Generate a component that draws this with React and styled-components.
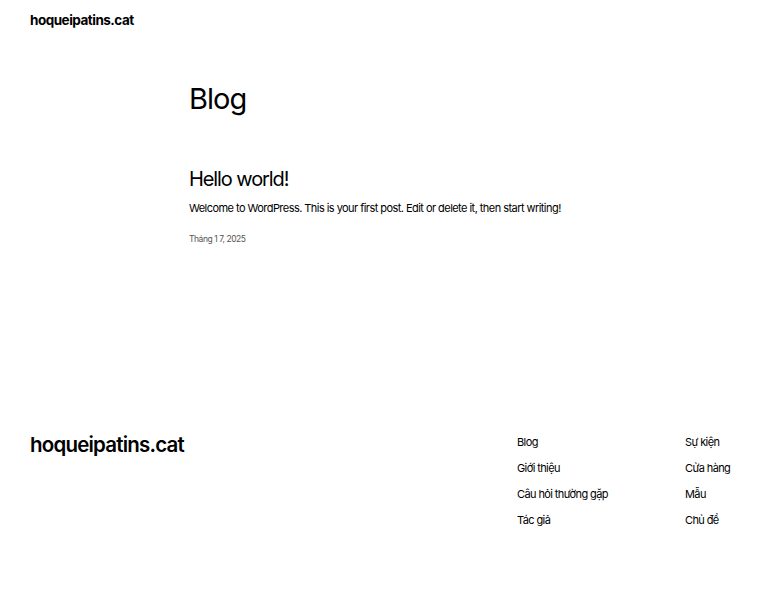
import React from 'react';
import styled, { createGlobalStyle } from 'styled-components';

const GlobalStyle = createGlobalStyle`
    html, body {
        margin: 0;
        padding: 0;
        background: #ffffff;
        color: #000000;
        font-family: Inter, "Noto Sans", "Liberation Sans", sans-serif;
        -webkit-font-smoothing: antialiased;
    }
    a {
        color: inherit;
        text-decoration: none;
    }
`

const links = [
    ['Blog', 'Sự kiện'],
    ['Giới thiệu', 'Cửa hàng'],
    ['Câu hỏi thường gặp', 'Mẫu'],
    ['Tác giả', 'Chủ đề'],
]

const App = () => {
    return (
        <>
            <GlobalStyle />
            <Page>
                <Header>
                    <SiteTitle href="#">hoqueipatins.cat</SiteTitle>
                </Header>
                <Main>
                    <PageTitle>Blog</PageTitle>
                    <Post>
                        <PostTitle href="#">Hello world!</PostTitle>
                        <Excerpt>Welcome to WordPress. This is your first post. Edit or delete it, then start writing!</Excerpt>
                        <PostDate>Tháng 1 7, 2025</PostDate>
                    </Post>
                </Main>
                <Footer>
                    <FooterTitle href="#">hoqueipatins.cat</FooterTitle>
                    <FooterNav>
                        {[0, 1].map(col => (
                            <NavColumn key={col}>
                                {links.map(row => (
                                    <NavLink key={row[col]} href="#">{row[col]}</NavLink>
                                ))}
                            </NavColumn>
                        ))}
                    </FooterNav>
                </Footer>
            </Page>
        </>
    )
}

const Page = styled.div`
    width: 760px;
    min-height: 600px;
    display: flex;
    flex-direction: column;
`
const Header = styled.header`
    display: flex;
    align-items: center;
    height: 42px;
    padding: 0 30px;
`
const SiteTitle = styled.a`
    font-size: 13.5px;
    font-weight: 700;
    letter-spacing: -0.5px;
    margin-top: -2px;
`
const Main = styled.main`
    width: 382px;
    margin: 0 auto;
    padding-top: 38px;
`
const PageTitle = styled.h1`
    margin: 0;
    font-size: 29px;
    font-weight: 400;
    letter-spacing: -1px;
    line-height: 38px;
`
const Post = styled.article`
    margin-top: 47px;
    display: flex;
    flex-direction: column;
`
const PostTitle = styled.a`
    font-size: 20px;
    font-weight: 400;
    letter-spacing: -1.1px;
    line-height: 28px;
`
const Excerpt = styled.p`
    margin: 6px 0 0;
    font-size: 11px;
    letter-spacing: -0.55px;
    line-height: 18px;
    white-space: nowrap;
`
const PostDate = styled.time`
    margin-top: 16px;
    font-size: 8.5px;
    color: #555555;
    letter-spacing: -0.45px;
    line-height: 12px;
`
const Footer = styled.footer`
    display: flex;
    justify-content: space-between;
    align-items: flex-start;
    margin-top: 187px;
    padding: 0 30px;
`
const FooterTitle = styled.a`
    font-size: 20.5px;
    font-weight: 600;
    letter-spacing: -0.8px;
    line-height: 28px;
    margin-top: -1px;
`
const FooterNav = styled.nav`
    display: grid;
    grid-template-columns: 168px 45px;
    margin-top: 1px;
`
const NavColumn = styled.div`
    display: flex;
    flex-direction: column;
    gap: 8px;
`
const NavLink = styled.a`
    font-size: 11px;
    letter-spacing: -0.6px;
    line-height: 18px;
    white-space: nowrap;
`

export default App
